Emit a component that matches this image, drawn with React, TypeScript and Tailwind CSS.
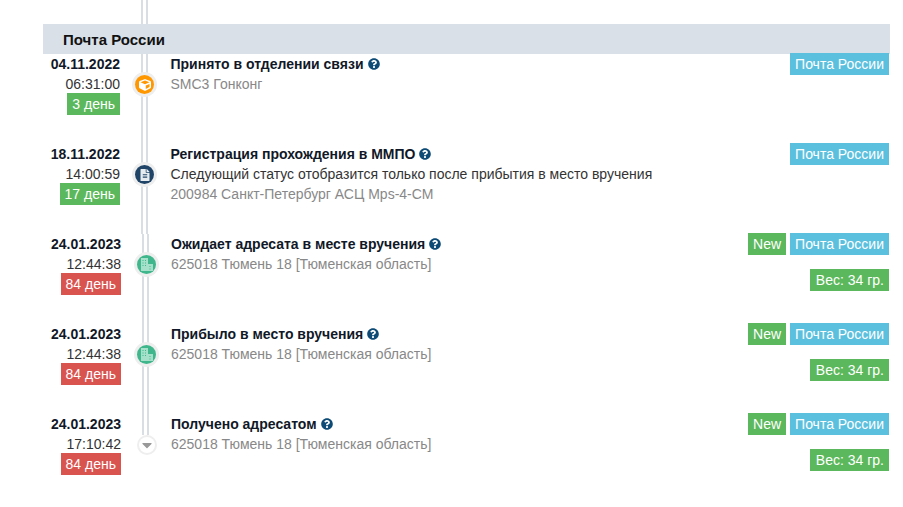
import { FaCube, FaFileAlt, FaCaretDown, FaQuestionCircle } from "react-icons/fa";

type IconKind = "cube" | "file" | "building" | "caret";

interface Step {
  date: string;
  time: string;
  days: string;
  late?: boolean;
  title: string;
  note?: string;
  place: string;
  isNew?: boolean;
  weight?: boolean;
  icon: IconKind;
}

const steps: Step[] = [
  {
    date: "04.11.2022",
    time: "06:31:00",
    days: "3 день",
    title: "Принято в отделении связи",
    place: "SMC3 Гонконг",
    icon: "cube",
  },
  {
    date: "18.11.2022",
    time: "14:00:59",
    days: "17 день",
    title: "Регистрация прохождения в ММПО",
    note: "Следующий статус отобразится только после прибытия в место вручения",
    place: "200984 Санкт-Петербург АСЦ Mps-4-СМ",
    icon: "file",
  },
  {
    date: "24.01.2023",
    time: "12:44:38",
    days: "84 день",
    late: true,
    title: "Ожидает адресата в месте вручения",
    place: "625018 Тюмень 18 [Тюменская область]",
    isNew: true,
    weight: true,
    icon: "building",
  },
  {
    date: "24.01.2023",
    time: "12:44:38",
    days: "84 день",
    late: true,
    title: "Прибыло в место вручения",
    place: "625018 Тюмень 18 [Тюменская область]",
    isNew: true,
    weight: true,
    icon: "building",
  },
  {
    date: "24.01.2023",
    time: "17:10:42",
    days: "84 день",
    late: true,
    title: "Получено адресатом",
    place: "625018 Тюмень 18 [Тюменская область]",
    isNew: true,
    weight: true,
    icon: "caret",
  },
];

function Label({ className, children }: { className: string; children: React.ReactNode }) {
  return <span className={`inline-block h-[22px] text-[14px] leading-[23px] text-white ${className}`}>{children}</span>;
}

function BuildingIcon() {
  return (
    <svg viewBox="0 0 13 13" className="h-[13px] w-[13px]" fill="#a6e0ca">
      <path d="M1 0h7v13H1z" />
      <path d="M8 6h5v7H8z" />
      <path d="M2.5 2h1v1h-1zM5 2h1v1H5zM2.5 4.5h1v1h-1zM5 4.5h1v1H5zM2.5 7h1v1h-1zM5 7h1v1H5zM9.5 8h1v1h-1zM9.5 10.5h1v1h-1z" fill="#3fb68b" />
    </svg>
  );
}

function StepIcon({ kind }: { kind: IconKind }) {
  if (kind === "cube") {
    return (
      <div className="absolute left-[15px] top-[21px] flex h-[19px] w-[19px] items-center justify-center rounded-full bg-[#ff9800] text-white ring-[3px] ring-[#eeeeee]">
        <FaCube className="text-[12px]" />
      </div>
    );
  }
  if (kind === "file") {
    return (
      <div className="absolute left-[15px] top-[21px] flex h-[19px] w-[19px] items-center justify-center rounded-full bg-[#1f4468] text-[#e6ebf0] ring-[3px] ring-[#eeeeee]">
        <FaFileAlt className="text-[12px]" />
      </div>
    );
  }
  if (kind === "building") {
    return (
      <div className="absolute left-[16px] top-[21px] flex h-[19px] w-[19px] items-center justify-center rounded-full bg-[#3fb68b] ring-[3px] ring-[#eeeeee]">
        <BuildingIcon />
      </div>
    );
  }
  return (
    <div className="absolute left-[18px] top-[23px] flex h-[16px] w-[16px] items-center justify-center rounded-full bg-white text-[#999999] ring-2 ring-[#eeeeee]">
      <FaCaretDown className="text-[16px]" />
    </div>
  );
}

function Row({ step, index, last }: { step: Step; index: number; last: boolean }) {
  // the first two rows sit a pixel further left than the others in the source table
  const early = index < 2;
  return (
    <div className="flex h-[90px]">
      <div className={`flex flex-col items-end ${early ? "w-[77px]" : "w-[78px]"}`}>
        <div className="h-[20px] text-[14px] font-bold leading-[20px] text-[#111827]">{step.date}</div>
        <div className="h-[19px] text-[14px] leading-[20px] text-[#333333]">{step.time}</div>
        <Label className={`px-[5px] ${step.late ? "bg-[#d9534f]" : "bg-[#5cb85c]"}`}>{step.days}</Label>
      </div>
      <div className={`relative ${early ? "w-[50.5px]" : "w-[50px]"}`}>
        <div className={`absolute left-[21px] top-0 w-[7px] border-x-2 border-[#d9dee4] ${last ? "h-[21px]" : "h-full"}`} />
        <StepIcon kind={step.icon} />
      </div>
      <div className="min-w-0 flex-1">
        <div className="flex h-[20px] items-center gap-[4px] text-[14px] font-bold leading-[20px] text-[#111827]">
          {step.title}
          <FaQuestionCircle className="text-[12px] text-[#0d4a75]" />
        </div>
        {step.note && <div className="h-[20px] text-[14px] leading-[20px] text-[#333333]">{step.note}</div>}
        <div className="h-[20px] text-[14px] leading-[20px] text-[#888888]">{step.place}</div>
      </div>
      <div className="relative -mt-px flex flex-col items-end pr-px">
        <div className="flex gap-[4px]">
          {step.isNew && <Label className="bg-[#5cb85c] px-[5px]">New</Label>}
          <Label className="bg-[#5bc0de] px-[5px]">Почта России</Label>
        </div>
        {step.weight && <Label className="mt-[14px] bg-[#5cb85c] pl-[6px] pr-[5px]">Вес: 34 гр.</Label>}
      </div>
    </div>
  );
}

export default function App() {
  return (
    <div className="min-h-[507px] bg-white pl-[43px] pr-[13px] font-['Liberation_Sans',Arial,sans-serif]">
      <div className="ml-[98px] h-[24px] w-[7px] border-x-2 border-[#d9dee4]" />
      <div className="flex h-[30px] items-center bg-[#d9e0e8] pl-[20px] pt-[3px] text-[15px] font-bold text-[#111111]">Почта России</div>
      {steps.map((step, i) => (
        <Row key={i} step={step} index={i} last={i === steps.length - 1} />
      ))}
    </div>
  );
}
